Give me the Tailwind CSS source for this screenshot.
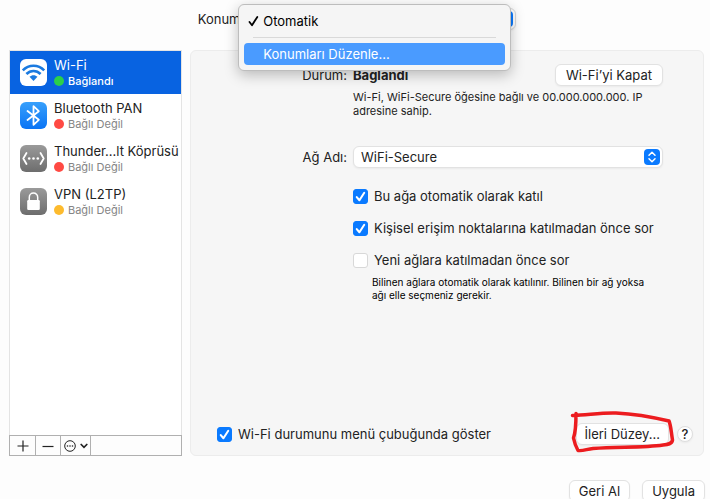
<!DOCTYPE html>
<html lang="tr">
<head>
  <meta charset="UTF-8">
  <meta name="viewport" content="width=device-width, initial-scale=1.0">
  <title>Ağ</title>
  <script src="https://cdn.jsdelivr.net/npm/@tailwindcss/browser@4"></script>
</head>
<body class="h-screen flex flex-col overflow-hidden bg-[#fdfdfd] text-[#222] text-[13px] leading-[16px] font-['Inter',sans-serif]">

  <!-- Location -->
  <header class="h-[50px] shrink-0 flex items-start justify-center gap-1.5 pt-2 pl-1">
    <label for="location" class="pt-[3px]">Konum:</label>
    <div class="relative w-[266px]">
      <select id="location" class="appearance-none block w-full h-[22px] pl-2 rounded-md bg-white border border-[#d8d8d8] shadow-xs">
        <option>Otomatik</option>
      </select>
      <span class="absolute right-[3px] top-[3px] w-4 h-4 rounded bg-[#0a7aff] pointer-events-none"></span>

      <!-- Open menu -->
      <div role="menu" class="absolute z-10 right-[5px] -top-1 w-[273px] p-[5px] rounded-md bg-[#f5f5f5] border border-[#bdbdbd] shadow-[0_4px_14px_rgba(0,0,0,0.25)]">
        <button role="menuitem" class="w-full h-[22px] flex items-center pl-1 text-black">
          <svg class="w-[11px] h-3 mr-1" viewBox="0 0 11 12" fill="none" stroke="currentColor" stroke-width="1.8" stroke-linecap="round" stroke-linejoin="round"><path d="M1.5 7 4 10.2 9.3 2"/></svg>
          Otomatik
        </button>
        <hr class="mx-[9px] my-[5px] border-[#d9d9d9]">
        <button role="menuitem" class="w-full h-[22px] flex items-center pl-[19px] rounded bg-[#4a9bff] text-white">Konumları Düzenle...</button>
      </div>
    </div>
  </header>

  <main class="flex-1 min-h-0 flex gap-2 pl-[9px] pr-1.5">

    <!-- Services -->
    <aside class="w-[173px] shrink-0 flex flex-col">
      <ul class="flex-1 bg-white border-x border-t border-[#e4e4e4]">
        <li class="h-[43px] flex items-center gap-[7px] pl-2.5 bg-[#0863e1] text-white">
          <svg class="w-[27px] h-[27px] shrink-0" viewBox="0 0 27 27">
            <rect width="27" height="27" rx="6" fill="#fff"/>
            <g fill="none" stroke="#1a7ae0" stroke-width="2.6">
              <path d="M2.8 11.400c6-6.200 15.400-6.200 21.400 0"/>
              <path d="M6.400 15c4-4.100 10.200-4.100 14.200 0"/>
            </g>
            <path d="M9.500 17.800c2.300-2.200 5.700-2.200 8 0l-4 4.200z" fill="#1a7ae0"/>
          </svg>
          <div>
            <p>Wi-Fi</p>
            <p class="flex items-center gap-1 text-[11px] leading-[16px] font-medium"><span class="w-2.5 h-2.5 rounded-full bg-[#2bd04b]"></span>Bağlandı</p>
          </div>
        </li>
        <li class="h-[43px] flex items-center gap-[7px] pl-2.5">
          <svg class="w-[27px] h-[27px] shrink-0" viewBox="0 0 27 27">
            <defs><linearGradient id="blue" x2="0" y2="1"><stop stop-color="#38a0fb"/><stop offset="1" stop-color="#0a74f5"/></linearGradient></defs>
            <rect width="27" height="27" rx="6" fill="url(#blue)"/>
            <path d="M7.500 9 18.800 17.800l-5.300 5V4.200l5.300 5L7.500 18" fill="none" stroke="#fff" stroke-width="1.800" stroke-linejoin="round" stroke-linecap="round"/>
          </svg>
          <div>
            <p>Bluetooth PAN</p>
            <p class="flex items-center gap-1 text-[11px] leading-[16px] text-[#858585]"><span class="w-2.5 h-2.5 rounded-full bg-[#ff4a43]"></span>Bağlı Değil</p>
          </div>
        </li>
        <li class="h-[43px] flex items-center gap-[7px] pl-2.5">
          <svg class="w-[27px] h-[27px] shrink-0" viewBox="0 0 27 27">
            <defs><linearGradient id="gray" x2="0" y2="1"><stop stop-color="#9a9a9a"/><stop offset="1" stop-color="#6d6d6d"/></linearGradient></defs>
            <rect width="27" height="27" rx="6" fill="url(#gray)"/>
            <path d="M6.500 8 3.300 13.500l3.200 5.500M20.500 8l3.200 5.500-3.200 5.500" fill="none" stroke="#fff" stroke-width="1.800" stroke-linecap="round" stroke-linejoin="round"/>
            <g fill="#fff"><circle cx="9.200" cy="13.500" r="1.300"/><circle cx="13.500" cy="13.500" r="1.300"/><circle cx="17.800" cy="13.500" r="1.300"/></g>
          </svg>
          <div>
            <p class="whitespace-nowrap">Thunder...lt Köprüsü</p>
            <p class="flex items-center gap-1 text-[11px] leading-[16px] text-[#858585]"><span class="w-2.5 h-2.5 rounded-full bg-[#ff4a43]"></span>Bağlı Değil</p>
          </div>
        </li>
        <li class="h-[43px] flex items-center gap-[7px] pl-2.5">
          <svg class="w-[27px] h-[27px] shrink-0" viewBox="0 0 27 27">
            <rect width="27" height="27" rx="6" fill="url(#gray)"/>
            <path d="M9.300 13V9.300a4.200 4.200 0 0 1 8.400 0V13" fill="none" stroke="#fff" stroke-width="1.500"/>
            <rect x="7.200" y="12" width="12.600" height="10" rx="1.200" fill="#fff"/>
          </svg>
          <div>
            <p>VPN (L2TP)</p>
            <p class="flex items-center gap-1 text-[11px] leading-[16px] text-[#858585]"><span class="w-2.5 h-2.5 rounded-full bg-[#fdbb2e]"></span>Bağlı Değil</p>
          </div>
        </li>
      </ul>

      <!-- Add / remove / more -->
      <div class="h-[21px] flex border border-[#b0b0b0] text-[#222]">
        <button aria-label="Ekle" class="w-[26px] flex items-center justify-center border-r border-[#b0b0b0]">
          <svg class="w-3 h-3" viewBox="0 0 12 12" stroke="currentColor" stroke-width="1.200"><path d="M.5 6h11M6 .5v11"/></svg>
        </button>
        <button aria-label="Sil" class="w-[25px] flex items-center justify-center border-r border-[#b0b0b0]">
          <svg class="w-3 h-3" viewBox="0 0 12 12" stroke="currentColor" stroke-width="1.200"><path d="M.5 6.500h11"/></svg>
        </button>
        <button aria-label="Diğer" class="w-[30px] flex items-center justify-center gap-1 border-r border-[#b0b0b0]">
          <svg class="w-3 h-3" viewBox="0 0 12 12"><circle cx="6" cy="6" r="5.300" fill="none" stroke="currentColor"/><g fill="currentColor"><circle cx="3.500" cy="6" r=".8"/><circle cx="6" cy="6" r=".8"/><circle cx="8.500" cy="6" r=".8"/></g></svg>
          <svg class="w-2 h-2" viewBox="0 0 8 8" fill="none" stroke="currentColor" stroke-width="1.700" stroke-linecap="round"><path d="m1.200 2.500 2.800 2.800 2.800-2.800"/></svg>
        </button>
      </div>
    </aside>

    <!-- Details -->
    <section class="flex-1 flex flex-col justify-between rounded-md bg-[#f6f6f6] border border-[#ececec]">
      <div class="grid grid-cols-[156px_1fr] gap-x-1.5 pr-10 pt-[13px]">
        <p class="text-right pt-[3px]">Durum:</p>
        <div>
          <div class="flex items-start justify-between">
            <strong class="pt-[3px] font-bold">Bağlandı</strong>
            <button class="h-[22px] px-2.5 rounded-md bg-white border border-[#e2e2e2] shadow-xs">Wi-Fi’yi Kapat</button>
          </div>
          <p class="mt-1 text-[11px] leading-[14px]">Wi-Fi, WiFi-Secure öğesine bağlı ve 00.000.000.000. IP adresine sahip.</p>
        </div>

        <label for="network" class="text-right mt-7 pt-[3px]">Ağ Adı:</label>
        <div class="relative mt-7">
          <select id="network" class="appearance-none block w-full h-[22px] pl-[7px] rounded-md bg-white border border-[#e2e2e2] shadow-xs">
            <option>WiFi-Secure</option>
          </select>
          <svg class="absolute right-[3px] top-[3px] w-4 h-4 pointer-events-none" viewBox="0 0 16 16"><rect width="16" height="16" rx="4" fill="#0a7aff"/><path d="M5 6.200 8 3.300l3 2.900M5 9.800l3 2.900 3-2.900" fill="none" stroke="#fff" stroke-width="1.500" stroke-linecap="round" stroke-linejoin="round"/></svg>
        </div>

        <div class="col-start-2 mt-5 flex flex-col gap-4">
          <label class="flex items-center gap-1.5 whitespace-nowrap">
            <span class="grid">
              <input type="checkbox" checked class="peer appearance-none col-start-1 row-start-1 w-[15px] h-[15px] rounded-[3px] bg-white border border-[#d8d8d8] checked:bg-[#0a7aff] checked:border-[#0a7aff]">
              <svg class="hidden peer-checked:block pointer-events-none col-start-1 row-start-1 w-[15px] h-[15px]" viewBox="0 0 14 14" fill="none" stroke="#fff" stroke-width="1.900" stroke-linecap="round" stroke-linejoin="round"><path d="M3.500 7.500 6 10.500l4.500-7"/></svg>
            </span>
            Bu ağa otomatik olarak katıl
          </label>
          <label class="flex items-center gap-1.5 whitespace-nowrap">
            <span class="grid">
              <input type="checkbox" checked class="peer appearance-none col-start-1 row-start-1 w-[15px] h-[15px] rounded-[3px] bg-white border border-[#d8d8d8] checked:bg-[#0a7aff] checked:border-[#0a7aff]">
              <svg class="hidden peer-checked:block pointer-events-none col-start-1 row-start-1 w-[15px] h-[15px]" viewBox="0 0 14 14" fill="none" stroke="#fff" stroke-width="1.900" stroke-linecap="round" stroke-linejoin="round"><path d="M3.500 7.500 6 10.500l4.500-7"/></svg>
            </span>
            Kişisel erişim noktalarına katılmadan önce sor
          </label>
          <label class="flex items-center gap-1.5 whitespace-nowrap">
            <span class="grid">
              <input type="checkbox" aria-describedby="join-help" class="peer appearance-none col-start-1 row-start-1 w-[15px] h-[15px] rounded-[3px] bg-white border border-[#d8d8d8] checked:bg-[#0a7aff] checked:border-[#0a7aff]">
              <svg class="hidden peer-checked:block pointer-events-none col-start-1 row-start-1 w-[15px] h-[15px]" viewBox="0 0 14 14" fill="none" stroke="#fff" stroke-width="1.900" stroke-linecap="round" stroke-linejoin="round"><path d="M3.500 7.500 6 10.500l4.500-7"/></svg>
            </span>
            Yeni ağlara katılmadan önce sor
          </label>
        </div>
        <p id="join-help" class="col-start-2 pl-[19px] pr-2 mt-2 text-[10px] leading-[13px] text-black">Bilinen ağlara otomatik olarak katılınır. Bilinen bir ağ yoksa ağı elle seçmeniz gerekir.</p>
      </div>

      <div class="flex items-center justify-between pl-[26px] pr-2.5 pb-2.5">
        <label class="flex items-center gap-1.5 whitespace-nowrap">
          <span class="grid">
            <input type="checkbox" checked class="peer appearance-none col-start-1 row-start-1 w-[15px] h-[15px] rounded-[3px] bg-white border border-[#d8d8d8] checked:bg-[#0a7aff] checked:border-[#0a7aff]">
            <svg class="hidden peer-checked:block pointer-events-none col-start-1 row-start-1 w-[15px] h-[15px]" viewBox="0 0 14 14" fill="none" stroke="#fff" stroke-width="1.900" stroke-linecap="round" stroke-linejoin="round"><path d="M3.500 7.500 6 10.500l4.500-7"/></svg>
          </span>
          Wi-Fi durumunu menü çubuğunda göster
        </label>
        <div class="flex items-center gap-2">
          <div class="relative">
            <button class="block h-[22px] px-2 rounded-md bg-white border border-[#e2e2e2] shadow-xs">İleri Düzey...</button>
            <!-- Marker circle round the button -->
            <svg class="absolute -left-1.5 -top-3 w-[107px] h-[42px] pointer-events-none" viewBox="0 0 107 42" fill="none" stroke="#ec1c1f" stroke-width="3.500" stroke-linecap="round" stroke-linejoin="round">
              <path d="M6 2.500C6 12 6 20 3.500 27c1 5 2.500 9 4.500 12.500 5 .8 9-1.500 15-2 25-2 50-.5 70-3.500 5-.5 9-1 9.500-5C101 20 101 15 99 10 82 6 66 3 46 2 31 1.500 18 4 2.500 4.500"/>
            </svg>
          </div>
          <button aria-label="Yardım" class="w-4 h-4 rounded-full bg-white border border-[#dedede] shadow-xs flex items-center justify-center font-medium">?</button>
        </div>
      </div>
    </section>
  </main>

  <footer class="h-[43px] shrink-0 flex items-start justify-end gap-3 pt-6 pr-[5px]">
    <button class="h-[22px] shrink-0 px-[9px] rounded-md bg-white border border-[#e2e2e2] shadow-xs">Geri Al</button>
    <button class="h-[22px] shrink-0 px-[9px] rounded-md bg-white border border-[#e2e2e2] shadow-xs">Uygula</button>
  </footer>

</body>
</html>
